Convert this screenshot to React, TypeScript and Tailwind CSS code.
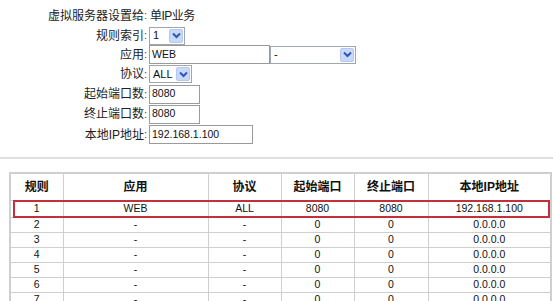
import React from 'react';

const cjk = { fontFamily: '"Liberation Sans", "Noto Sans CJK SC", sans-serif' };

const Chevron = () => (
  <svg width="9" height="7" viewBox="0 0 9 7">
    <path d="M1 1.5 L4.5 5 L8 1.5" fill="none" stroke="#2f57b8" strokeWidth="2" />
  </svg>
);

const FakeSelect = ({ value, width }: { value: string; width: string }) => (
  <div className={`flex h-[18px] ${width} items-center border border-[#9fa6ad] bg-white pl-[3px] pr-[1px]`}>
    <span className="flex-1 text-[11px] text-[#111]">{value}</span>
    <div className="flex h-[14px] w-[14px] items-center justify-center rounded-[2px] border border-[#b7c8ee] bg-[#c9d9fb]">
      <Chevron />
    </div>
  </div>
);

const FakeInput = ({ value, width }: { value: string; width: string }) => (
  <div className={`flex h-[19px] ${width} items-center border border-[#9a9a9a] bg-white pl-[2px] text-[10.5px] text-[#111]`}>
    {value}
  </div>
);

const FormRow = ({ label, h, children }: { label: string; h: string; children: React.ReactNode }) => (
  <div className={`flex ${h} items-center`}>
    <div className="w-[144px] text-right text-[12px] text-[#222]">{label}</div>
    <div className="w-[5px] text-[11px] text-[#444]">:</div>
    <div className="flex items-center">{children}</div>
  </div>
);

const rows = [
  ['1', 'WEB', 'ALL', '8080', '8080', '192.168.1.100'],
  ['2', '-', '-', '0', '0', '0.0.0.0'],
  ['3', '-', '-', '0', '0', '0.0.0.0'],
  ['4', '-', '-', '0', '0', '0.0.0.0'],
  ['5', '-', '-', '0', '0', '0.0.0.0'],
  ['6', '-', '-', '0', '0', '0.0.0.0'],
  ['7', '-', '-', '0', '0', '0.0.0.0'],
];

const headers = ['规则', '应用', '协议', '起始端口', '终止端口', '本地IP地址'];
const widths = ['w-[53px]', 'w-[145px]', 'w-[73px]', 'w-[73px]', 'w-[74px]', 'w-[123px]'];

export default function App() {
  return (
    <div className="h-[301px] w-[553px] overflow-hidden bg-white" style={cjk}>
      {/* settings form */}
      <div className="pt-[5px]">
        <FormRow label="虚拟服务器设置给" h="h-[21px]">
          <span className="ml-[1px] text-[12px] tracking-[-0.5px] text-[#222]">单IP业务</span>
        </FormRow>
        <FormRow label="规则索引" h="h-[19px]">
          <FakeSelect value="1" width="w-[36px]" />
        </FormRow>
        <FormRow label="应用" h="h-[19px]">
          <FakeInput value="WEB" width="w-[121px]" />
          <FakeSelect value="-" width="w-[86px]" />
        </FormRow>
        <FormRow label="协议" h="h-[20px]">
          <FakeSelect value="ALL" width="w-[43px]" />
        </FormRow>
        <FormRow label="起始端口数" h="h-[20px]">
          <FakeInput value="8080" width="w-[51px]" />
        </FormRow>
        <FormRow label="终止端口数" h="h-[20px]">
          <FakeInput value="8080" width="w-[51px]" />
        </FormRow>
        <FormRow label="本地IP地址" h="h-[21px]">
          <FakeInput value="192.168.1.100" width="w-[104px]" />
        </FormRow>
      </div>

      <div className="mt-[12px] h-[2px] w-full bg-[#dedede]" />

      {/* rule list */}
      <div className="relative ml-[9px] mt-[13px] w-[541px]">
        <table className="w-[541px] table-fixed border-collapse border-2 border-[#cfcfcf]">
          <thead>
            <tr className="h-[27px]">
              {headers.map((h, i) => (
                <th key={h} className={`${widths[i]} border border-[#cfcfcf] text-[12px] font-bold text-[#111]`}>
                  {h}
                </th>
              ))}
            </tr>
          </thead>
          <tbody>
            {rows.map((r, ri) => (
              <tr key={ri} className={ri === 0 ? 'h-[17px]' : 'h-[15px]'}>
                {r.map((c, ci) => (
                  <td
                    key={ci}
                    className="border border-[#cfcfcf] p-0 text-center text-[10.5px] leading-[13px] text-[#111]"
                  >
                    {c}
                  </td>
                ))}
              </tr>
            ))}
          </tbody>
        </table>
        <div className="absolute left-[4px] top-[28px] h-[18px] w-[537px] border-2 border-[#c4303a]" />
      </div>
    </div>
  );
}
